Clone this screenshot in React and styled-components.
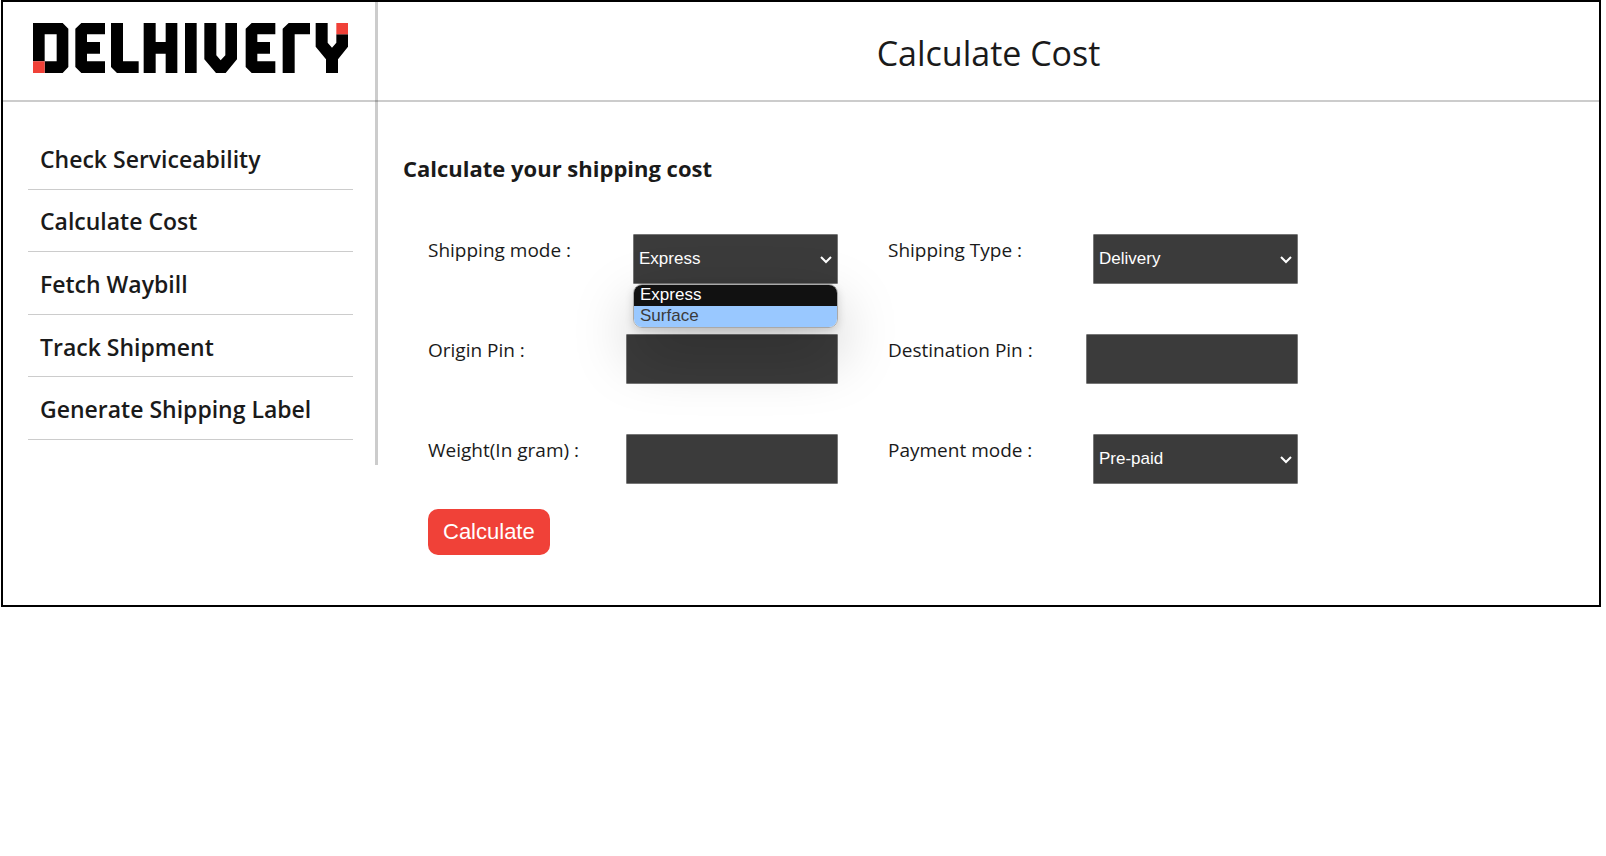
import React, { useState } from 'react';
import styled, { createGlobalStyle } from 'styled-components';

const GlobalStyle = createGlobalStyle`
  *, *::before, *::after { box-sizing: border-box; }
  body {
    margin: 0;
    background: #fff;
    color: #1a1a1a;
    font-family: "Segoe UI", "Open Sans", "Noto Sans", sans-serif;
  }
`;

const Frame = styled.div`
  margin: 0 5px 0 1px;
  border: 2px solid #000;
`;

const Header = styled.header`
  display: flex;
  height: 100px;
  border-bottom: 2px solid rgba(0, 0, 0, 0.2);
`;

const LogoCell = styled.div`
  flex: 0 0 375px;
  display: flex;
  align-items: flex-start;
  padding: 21px 0 0 30px;
  margin-bottom: -2px;
  border-right: 3px solid rgba(0, 0, 0, 0.2);
`;

const LogoLink = styled.a`
  display: block;
  color: #000;
  svg { display: block; }
`;

const Title = styled.h1`
  flex: 1;
  display: flex;
  align-items: center;
  justify-content: center;
  margin: 0;
  padding-top: 4px;
  font-size: 34px;
  line-height: 48px;
  font-weight: 400;
`;

const Body = styled.div`
  display: flex;
  align-items: flex-start;
`;

const Sidebar = styled.nav`
  flex: 0 0 375px;
  padding: 25px 22px 25px 25px;
  border-right: 3px solid #ccc;
`;

const NavList = styled.ul`
  display: grid;
  grid-auto-rows: 1fr;
  height: 313px;
  margin: 0;
  padding: 0;
  list-style: none;
`;

const NavItem = styled.li`
  display: flex;
  border-bottom: 1px solid #ccc;
`;

const NavLink = styled.a`
  flex: 1;
  display: flex;
  align-items: center;
  padding: 2px 0 0 12px;
  color: inherit;
  font-size: 23px;
  line-height: 32px;
  font-weight: 600;
  text-decoration: none;
`;

const Main = styled.main`
  flex: 1;
  padding: 50px 25px;
`;

const SectionTitle = styled.h2`
  margin: 0;
  font-size: 22px;
  line-height: 32px;
  font-weight: 700;
`;

const Form = styled.form`
  padding: 50px 25px 0;
`;

const Fields = styled.div`
  display: grid;
  grid-template-columns: repeat(auto-fill, 410px);
  gap: 50px;
`;

const Field = styled.div`
  display: flex;
  justify-content: space-between;
  align-items: flex-start;
`;

const Label = styled.label`
  font-size: 19px;
  line-height: 32px;
  font-weight: 400;
`;

const SelectBox = styled.div`
  position: relative;
  width: 205px;
`;

const Select = styled.select`
  display: block;
  width: 100%;
  height: 50px;
  padding: 0 24px 0 5px;
  appearance: none;
  border: 1px solid #767676;
  border-radius: 1px;
  background: #3b3b3b;
  color: #fff;
  font: 17px/24px Arial, "Liberation Sans", sans-serif;
`;

const Chevron = styled.svg`
  position: absolute;
  right: 5px;
  top: 20px;
  pointer-events: none;
`;

const TextInput = styled.input`
  width: 212px;
  height: 50px;
  padding: 0 5px;
  border: 1px solid #767676;
  border-radius: 1px;
  background: #3b3b3b;
  color: #fff;
  font: 17px/24px Arial, "Liberation Sans", sans-serif;
`;

const Menu = styled.ul`
  position: absolute;
  z-index: 1;
  top: 100%;
  left: 0;
  right: 0;
  margin: 0;
  padding: 0;
  overflow: hidden;
  list-style: none;
  border: 1px solid #a9a9a9;
  border-radius: 9px;
  box-shadow: 0 25px 60px rgba(0, 0, 0, 0.25), 0 3px 8px rgba(0, 0, 0, 0.15);
`;

const MenuItem = styled.li`
  padding: 0 6px 2px;
  background: ${(p) => (p.$active ? '#99c8ff' : '#111')};
  color: ${(p) => (p.$active ? '#3b3b3b' : '#fff')};
  font: 17px/19px Arial, "Liberation Sans", sans-serif;
  cursor: default;
`;

const Submit = styled.button`
  display: block;
  height: 46px;
  margin-top: 25px;
  padding: 0 15px;
  border: 0;
  border-radius: 10px;
  background: #f04138;
  color: #fff;
  font: 22px/28px Arial, "Liberation Sans", sans-serif;
`;

function Logo() {
  return (
    <svg width="315" height="50" viewBox="99 69 945 150" role="img" aria-label="Delhivery" fill="#000">
      <path fillRule="evenodd" d="M99 69H188L205 86V201L188 219H134V184H99ZM134 103V184H170V103Z" />
      <path d="M244 69H315V103H261V126H300V161H261V184H315V219H244L226 201V86Z" />
      <path d="M333 69H369V184H416V219H351L333 201Z" />
      <path d="M431 69H467V126H497V69H532V219H497V161H467V219H431Z" />
      <path d="M555 69H590V219H555Z" />
      <path d="M613 69H649V166L662 181L676 166V69H711V178L677 219H648L613 178Z" />
      <path d="M755 69H826V103H772V126H810V161H772V184H826V219H755L737 201V86Z" />
      <path d="M866 69H930V103H884V219H848V86Z" />
      <path d="M947 69H983V128L996 143L1009 128V103H1044V140L1014 178V219H978V178L947 140Z" />
      <path fill="#f04138" d="M99 184H134V219H99ZM1009 69H1044V103H1009Z" />
    </svg>
  );
}

const NAV = ['Check Serviceability', 'Calculate Cost', 'Fetch Waybill', 'Track Shipment', 'Generate Shipping Label'];

function SelectField({ id, label, options, defaultOpen = false }) {
  const [value, setValue] = useState(options[0]);
  const [open, setOpen] = useState(defaultOpen);
  const choose = (option) => {
    setValue(option);
    setOpen(false);
  };
  return (
    <Field>
      <Label htmlFor={id}>{label}</Label>
      <SelectBox>
        <Select id={id} value={value} onChange={(e) => choose(e.target.value)}>
          {options.map((o) => <option key={o}>{o}</option>)}
        </Select>
        <Chevron width="14" height="12" viewBox="0 0 14 12" fill="none" stroke="#fff" strokeWidth="2" aria-hidden="true">
          <path d="M2 3L7 8L12 3" />
        </Chevron>
        {open && (
          <Menu role="listbox" aria-label={label}>
            {options.map((o) => (
              <MenuItem key={o} role="option" aria-selected={o === value} $active={o !== value} onClick={() => choose(o)}>
                {o}
              </MenuItem>
            ))}
          </Menu>
        )}
      </SelectBox>
    </Field>
  );
}

function TextField({ id, label }) {
  return (
    <Field>
      <Label htmlFor={id}>{label}</Label>
      <TextInput id={id} type="text" inputMode="numeric" />
    </Field>
  );
}

export default function App() {
  return (
    <>
      <GlobalStyle />
      <Frame>
        <Header>
          <LogoCell>
            <LogoLink href="#home"><Logo /></LogoLink>
          </LogoCell>
          <Title>Calculate Cost</Title>
        </Header>
        <Body>
          <Sidebar>
            <NavList>
              {NAV.map((name) => (
                <NavItem key={name}>
                  <NavLink href={'#' + name.toLowerCase().replace(/ /g, '-')}>{name}</NavLink>
                </NavItem>
              ))}
            </NavList>
          </Sidebar>
          <Main>
            <SectionTitle>Calculate your shipping cost</SectionTitle>
            <Form onSubmit={(e) => e.preventDefault()}>
              <Fields>
                <SelectField id="mode" label="Shipping mode :" options={['Express', 'Surface']} defaultOpen />
                <SelectField id="type" label="Shipping Type :" options={['Delivery', 'Return']} />
                <TextField id="origin" label="Origin Pin :" />
                <TextField id="destination" label="Destination Pin :" />
                <TextField id="weight" label="Weight(In gram) :" />
                <SelectField id="payment" label="Payment mode :" options={['Pre-paid', 'COD']} />
              </Fields>
              <Submit type="submit">Calculate</Submit>
            </Form>
          </Main>
        </Body>
      </Frame>
    </>
  );
}
